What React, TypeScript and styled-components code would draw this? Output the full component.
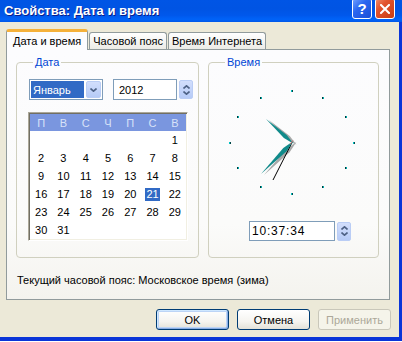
import React from 'react'
import styled, { createGlobalStyle } from 'styled-components'

const GlobalStyle = createGlobalStyle`
  html, body {
    margin: 0;
    padding: 0;
    background: #ffffff;
  }
  body {
    font-family: "Liberation Sans", Tahoma, Arial, sans-serif;
    font-size: 11px;
    color: #000;
  }
`

const Screen = styled.div`
  width: 402px;
  height: 342px;
  overflow: hidden;
  display: flex;
  flex-direction: column;
`

const TitleBar = styled.div`
  height: 22px;
  flex: none;
  display: flex;
  align-items: flex-end;
  padding: 0 7px 0 4px;
  box-sizing: border-box;
  overflow: hidden;
  background: linear-gradient(
    to bottom,
    #0055e5 0%,
    #0054e3 40%,
    #0058ec 70%,
    #0063f8 88%,
    #0057e8 100%
  );
`

const Title = styled.span`
  flex: 1;
  align-self: center;
  margin-top: -1px;
  color: #ffffff;
  font: bold 13px "Liberation Sans", Arial, sans-serif;
  text-shadow: 1px 1px #0a1e8a;
  white-space: nowrap;
`

const CaptionButton = styled.div<{ $variant: 'help' | 'close' }>`
  width: 20px;
  height: 21px;
  margin: 0 0 3px ${p => (p.$variant === 'close' ? '3px' : '0')};
  box-sizing: border-box;
  border: 1px solid #ffffff;
  border-radius: 3px;
  display: flex;
  align-items: center;
  justify-content: center;
  color: #ffffff;
  font: bold 15px "Liberation Sans", Arial, sans-serif;
  background: ${p =>
    p.$variant === 'close'
      ? 'linear-gradient(135deg, #f08a6a 0%, #e2532d 35%, #c83c14 100%)'
      : 'linear-gradient(135deg, #6fa0ff 0%, #2a66f0 40%, #1c4fd6 100%)'};
`

const Frame = styled.div`
  flex: 1;
  display: flex;
  flex-direction: column;
  background: #ece9d8;
  border-right: 3px solid #0a35d8;
  border-bottom: 4px solid #0a35d8;
  margin-bottom: 1px;
  padding: 7px 9px 0 6px;
  box-sizing: border-box;
`

const TabStrip = styled.div`
  display: flex;
  align-items: flex-end;
  position: relative;
  z-index: 1;
  margin-bottom: -1px;
`

const Tab = styled.div<{ $active?: boolean }>`
  height: ${p => (p.$active ? '21px' : '17px')};
  margin-bottom: ${p => (p.$active ? '0' : '1px')};
  padding: 0 ${p => (p.$active ? '6px' : '3px')};
  box-sizing: border-box;
  display: flex;
  align-items: center;
  border: 1px solid #919b9c;
  border-bottom: none;
  border-radius: 3px 3px 0 0;
  white-space: nowrap;
  background: ${p =>
    p.$active ? '#fcfcfe' : 'linear-gradient(#ffffff, #ecebe6)'};
  ${p => (p.$active ? `border-top: 3px solid #f5b13a;` : ``)}
  & + & {
    margin-left: 1px;
  }
`

const Panel = styled.div`
  height: 251px;
  box-sizing: border-box;
  border: 1px solid #919b9c;
  background: linear-gradient(#fcfcfe 0%, #fbfbfa 70%, #f4f3ee 100%);
  padding: 6px 0 0 9px;
  display: flex;
  flex-direction: column;
`

const Groups = styled.div`
  display: flex;
  gap: 9px;
`

const Group = styled.fieldset<{ $width: number }>`
  width: ${p => p.$width}px;
  height: 202px;
  box-sizing: border-box;
  margin: 0;
  padding: 0 0 0 11px;
  min-inline-size: 0;
  border: 1px solid #d0d0bf;
  border-radius: 4px;
  display: flex;
  flex-direction: column;
`

const Legend = styled.legend`
  color: #0046d5;
  padding: 0 2px;
  margin-left: 5px;
  line-height: 13px;
`

const FieldRow = styled.div`
  display: flex;
  align-items: center;
  margin: 10px 0 0 1px;
`

const Combo = styled.div`
  width: 74px;
  height: 21px;
  box-sizing: border-box;
  border: 1px solid #7f9db9;
  background: #ffffff;
  padding: 1px;
  display: flex;
  gap: 2px;
`

const ComboValue = styled.div`
  flex: 1;
  background: #316ac5;
  color: #ffffff;
  display: flex;
  align-items: center;
  padding-left: 2px;
`

const DropButton = styled.div`
  width: 15px;
  box-sizing: border-box;
  border: 1px solid #bacdf5;
  border-radius: 2px;
  background: linear-gradient(#d2defc, #b6cbf7);
  display: flex;
  align-items: center;
  justify-content: center;
`

const Edit = styled.div<{ $width: number; $spaced?: boolean }>`
  width: ${p => p.$width}px;
  height: ${p => (p.$spaced ? '20px' : '21px')};
  box-sizing: border-box;
  border: 1px solid #7f9db9;
  background: #ffffff;
  display: flex;
  align-items: center;
  padding-left: ${p => (p.$spaced ? '2px' : '5px')};
  font-size: ${p => (p.$spaced ? '12px' : '11px')};
  letter-spacing: ${p => (p.$spaced ? '0.8px' : '0')};
`

const Spinner = styled.div`
  width: 14px;
  height: 19px;
  margin-left: 2px;
  box-sizing: border-box;
  border: 1px solid #bacdf5;
  border-radius: 2px;
  background: linear-gradient(#d2defc, #b6cbf7);
  display: flex;
  flex-direction: column;
  align-items: center;
  justify-content: center;
  gap: 2px;
`

const YearGap = styled.div`
  width: 10px;
`

const Calendar = styled.div`
  width: 160px;
  margin-top: 12px;
  box-sizing: border-box;
  border: 1px solid;
  border-color: #aca899 #ffffff #ffffff #aca899;
  box-shadow: inset 1px 1px #716f64, inset -1px -1px #f1efe2;
  padding: 1px;
  background: #ffffff;
`

const WeekHeader = styled.div`
  height: 17px;
  display: grid;
  grid-template-columns: repeat(7, 1fr);
  background: #7a96df;
  color: #d8e2f8;
`

const DayGrid = styled.div`
  display: grid;
  grid-template-columns: repeat(7, 1fr);
  grid-auto-rows: 18px;
`

const Cell = styled.div`
  display: flex;
  align-items: center;
  justify-content: center;
`

const DayNum = styled.span<{ $selected?: boolean }>`
  padding: 0 1px;
  line-height: 13px;
  background: ${p => (p.$selected ? '#316ac5' : 'transparent')};
  color: ${p => (p.$selected ? '#ffffff' : '#000000')};
`

const ClockFace = styled.svg`
  display: block;
  margin: 11px 0 0 -11px;
`

const TimeRow = styled.div`
  display: flex;
  align-items: center;
  margin: 17px 0 0 29px;
`

const Status = styled.div`
  margin: 16px 0 0 1px;
  line-height: 13px;
`

const ButtonRow = styled.div`
  display: flex;
  justify-content: flex-end;
  gap: 8px;
  margin: 9px -1px 0 0;
`

const Button = styled.div<{ $default?: boolean; $disabled?: boolean }>`
  width: 73px;
  height: 21px;
  box-sizing: border-box;
  border: 1px solid ${p => (p.$disabled ? '#c9c7ba' : '#003c74')};
  border-radius: 3px;
  display: flex;
  align-items: center;
  justify-content: center;
  color: ${p => (p.$disabled ? '#aca899' : '#000000')};
  background: ${p =>
    p.$disabled ? '#f5f4ea' : 'linear-gradient(#ffffff 0%, #f5f4f0 60%, #e3e1d8 100%)'};
  box-shadow: ${p =>
    p.$default
      ? 'inset 1px 1px #cee7ff, inset -1px -1px #89ade4, inset 0 0 0 2px #bcd4f6'
      : 'none'};
`

const Chevron: React.FC<{ dir: 'up' | 'down'; size?: number }> = ({ dir, size = 7 }) => (
  <svg width={size} height={4} viewBox="0 0 7 4">
    <polyline
      points={dir === 'down' ? '0.5,0.5 3.5,3.2 6.5,0.5' : '0.5,3.5 3.5,0.8 6.5,3.5'}
      fill="none"
      stroke="#4d6185"
      strokeWidth="1.6"
    />
  </svg>
)

const weekDays = ['П', 'В', 'С', 'Ч', 'П', 'С', 'В']
const days: (number | null)[] = [
  ...Array(6).fill(null),
  ...Array.from({ length: 31 }, (_, i) => i + 1),
]

// clock geometry, in svg coordinates (face is slightly squashed)
const cx = 83
const cy = 62.5
const rx = 62
const ry = 51.5

const kite = (tx: number, ty: number, wideAt: number, half: number, tail: number) => {
  const dx = tx - cx
  const dy = ty - cy
  const len = Math.hypot(dx, dy)
  const ux = dx / len
  const uy = dy / len
  const px = -uy
  const py = ux
  const wx = cx + ux * wideAt
  const wy = cy + uy * wideAt
  return [
    [tx, ty],
    [wx + px * half, wy + py * half],
    [cx - ux * tail, cy - uy * tail],
    [wx - px * half, wy - py * half],
  ]
    .map(([x, y]) => `${x.toFixed(1)},${y.toFixed(1)}`)
    .join(' ')
}

const shift = (pts: string, ox: number, oy: number) =>
  pts
    .split(' ')
    .map(pair => {
      const [x, y] = pair.split(',').map(Number)
      return `${x + ox},${y + oy}`
    })
    .join(' ')

const Clock: React.FC = () => {
  const hour = kite(57, 39, 9, 2.1, 2)
  const minute = kite(52, 94, 10, 2.3, 2)
  return (
    <ClockFace width={168} height={124} viewBox="0 0 168 124">
      {Array.from({ length: 12 }, (_, i) => {
        const a = (i * Math.PI) / 6
        const x = Math.round(cx + rx * Math.sin(a))
        const y = Math.round(cy - ry * Math.cos(a))
        const main = i % 3 === 0
        return (
          <g key={i}>
            <rect x={x - 1} y={y - 1} width={1} height={2} fill={main ? '#00c0c0' : '#003838'} />
            <rect x={x} y={y - 1} width={1} height={2} fill={main ? '#004848' : '#00b0b0'} />
          </g>
        )
      })}
      <polygon points={shift(hour, 3, 1)} fill="#a8a8a8" />
      <polygon points={shift(minute, 3, 1)} fill="#a8a8a8" />
      <line x1={cx} y1={cy} x2={64} y2={100} stroke="#000000" strokeWidth={1} />
      <polygon points={hour} fill="#108a8a" />
      <polygon points={minute} fill="#108a8a" />
      <line x1={cx - 2} y1={cy + 2} x2={cx + 1} y2={cy - 2} stroke="#d07070" strokeWidth={1} />
    </ClockFace>
  )
}

const App: React.FC = () => (
  <>
    <GlobalStyle />
    <Screen>
      <TitleBar>
        <Title>Свойства: Дата и время</Title>
        <CaptionButton $variant="help">?</CaptionButton>
        <CaptionButton $variant="close">
          <svg width={10} height={10} viewBox="0 0 10 10">
            <path d="M1 1 L9 9 M9 1 L1 9" stroke="#ffffff" strokeWidth={2} strokeLinecap="square" />
          </svg>
        </CaptionButton>
      </TitleBar>
      <Frame>
        <TabStrip>
          <Tab $active>Дата и время</Tab>
          <Tab>Часовой пояс</Tab>
          <Tab>Время Интернета</Tab>
        </TabStrip>
        <Panel>
          <Groups>
            <Group $width={183}>
              <Legend>Дата</Legend>
              <FieldRow>
                <Combo>
                  <ComboValue>Январь</ComboValue>
                  <DropButton>
                    <Chevron dir="down" />
                  </DropButton>
                </Combo>
                <YearGap />
                <Edit $width={64}>2012</Edit>
                <Spinner>
                  <Chevron dir="up" />
                  <Chevron dir="down" />
                </Spinner>
              </FieldRow>
              <Calendar>
                <WeekHeader>
                  {weekDays.map((d, i) => (
                    <Cell key={i}>{d}</Cell>
                  ))}
                </WeekHeader>
                <DayGrid>
                  {days.map((d, i) => (
                    <Cell key={i}>{d && <DayNum $selected={d === 21}>{d}</DayNum>}</Cell>
                  ))}
                </DayGrid>
              </Calendar>
            </Group>
            <Group $width={171}>
              <Legend>Время</Legend>
              <Clock />
              <TimeRow>
                <Edit $width={86} $spaced>10:37:34</Edit>
                <Spinner>
                  <Chevron dir="up" />
                  <Chevron dir="down" />
                </Spinner>
              </TimeRow>
            </Group>
          </Groups>
          <Status>Текущий часовой пояс: Московское время (зима)</Status>
        </Panel>
        <ButtonRow>
          <Button $default>OK</Button>
          <Button>Отмена</Button>
          <Button $disabled>Применить</Button>
        </ButtonRow>
      </Frame>
    </Screen>
  </>
)

export default App
